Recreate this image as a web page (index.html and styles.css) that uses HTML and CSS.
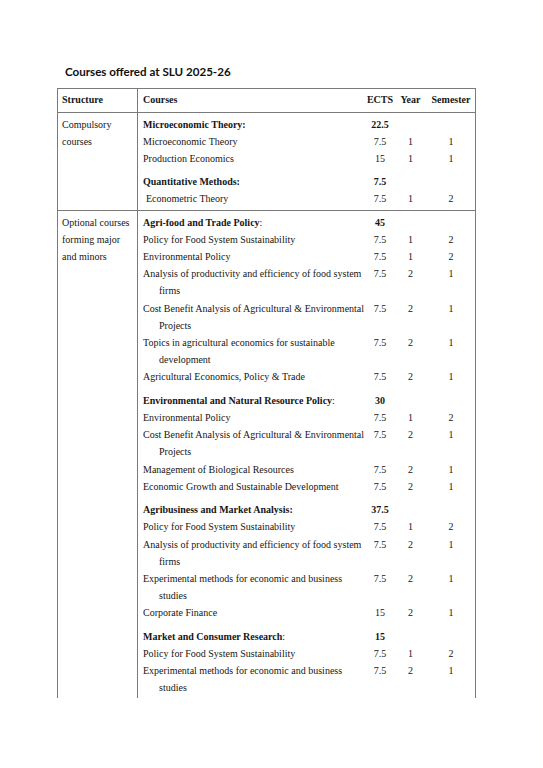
FILE: index.html
```html
<!DOCTYPE html>
<html lang="en">
<head>
<meta charset="utf-8">
<title>Courses offered at SLU 2025-26</title>
<link rel="stylesheet" href="styles.css">
</head>
<body>
<h1 class="title">Courses offered at SLU 2025-26</h1>
<div class="sheet">
  <div class="row head-row">
    <div class="struct"><b>Structure</b></div>
    <div class="cell">
      <div class="line">
        <span class="course"><b>Courses</b></span><b class="num">ECTS</b><b class="num">Year</b><b class="num">Semester</b>
      </div>
    </div>
  </div>

  <div class="row compulsory">
    <div class="struct">Compulsory courses</div>
    <div class="cell">
      <div class="group">
        <div class="line gh"><span class="course"><b>Microeconomic Theory:</b></span><b class="num">22.5</b><span></span><span></span></div>
        <div class="line"><span class="course">Microeconomic Theory</span><span class="num">7.5</span><span class="num">1</span><span class="num">1</span></div>
        <div class="line"><span class="course">Production Economics</span><span class="num">15</span><span class="num">1</span><span class="num">1</span></div>
      </div>
      <div class="group">
        <div class="line gh"><span class="course"><b>Quantitative Methods:</b></span><b class="num">7.5</b><span></span><span></span></div>
        <div class="line"><span class="course nudge">Econometric Theory</span><span class="num">7.5</span><span class="num">1</span><span class="num">2</span></div>
      </div>
    </div>
  </div>

  <div class="row optional">
    <div class="struct">Optional courses forming major and minors</div>
    <div class="cell">
      <div class="group">
        <div class="line gh"><span class="course"><b>Agri-food and Trade Policy</b>:</span><b class="num">45</b><span></span><span></span></div>
        <div class="line"><span class="course">Policy for Food System Sustainability</span><span class="num">7.5</span><span class="num">1</span><span class="num">2</span></div>
        <div class="line"><span class="course">Environmental Policy</span><span class="num">7.5</span><span class="num">1</span><span class="num">2</span></div>
        <div class="line"><span class="course">Analysis of productivity and efficiency of food system firms</span><span class="num">7.5</span><span class="num">2</span><span class="num">1</span></div>
        <div class="line"><span class="course">Cost Benefit Analysis of Agricultural &amp; Environmental Projects</span><span class="num">7.5</span><span class="num">2</span><span class="num">1</span></div>
        <div class="line"><span class="course">Topics in agricultural economics for sustainable development</span><span class="num">7.5</span><span class="num">2</span><span class="num">1</span></div>
        <div class="line"><span class="course">Agricultural Economics, Policy &amp; Trade</span><span class="num">7.5</span><span class="num">2</span><span class="num">1</span></div>
      </div>
      <div class="group">
        <div class="line gh"><span class="course"><b>Environmental and Natural Resource Policy</b>:</span><b class="num">30</b><span></span><span></span></div>
        <div class="line"><span class="course">Environmental Policy</span><span class="num">7.5</span><span class="num">1</span><span class="num">2</span></div>
        <div class="line"><span class="course">Cost Benefit Analysis of Agricultural &amp; Environmental Projects</span><span class="num">7.5</span><span class="num">2</span><span class="num">1</span></div>
        <div class="line"><span class="course">Management of Biological Resources</span><span class="num">7.5</span><span class="num">2</span><span class="num">1</span></div>
        <div class="line"><span class="course">Economic Growth and Sustainable Development</span><span class="num">7.5</span><span class="num">2</span><span class="num">1</span></div>
      </div>
      <div class="group">
        <div class="line gh"><span class="course"><b>Agribusiness and Market Analysis:</b></span><b class="num">37.5</b><span></span><span></span></div>
        <div class="line"><span class="course">Policy for Food System Sustainability</span><span class="num">7.5</span><span class="num">1</span><span class="num">2</span></div>
        <div class="line"><span class="course">Analysis of productivity and efficiency of food system firms</span><span class="num">7.5</span><span class="num">2</span><span class="num">1</span></div>
        <div class="line"><span class="course">Experimental methods for economic and business studies</span><span class="num">7.5</span><span class="num">2</span><span class="num">1</span></div>
        <div class="line"><span class="course">Corporate Finance</span><span class="num">15</span><span class="num">2</span><span class="num">1</span></div>
      </div>
      <div class="group">
        <div class="line gh"><span class="course"><b>Market and Consumer Research</b>:</span><b class="num">15</b><span></span><span></span></div>
        <div class="line"><span class="course">Policy for Food System Sustainability</span><span class="num">7.5</span><span class="num">1</span><span class="num">2</span></div>
        <div class="line"><span class="course">Experimental methods for economic and business studies</span><span class="num">7.5</span><span class="num">2</span><span class="num">1</span></div>
      </div>
    </div>
  </div>
</div>
</body>
</html>
```

FILE: styles.css
```css
html, body {
  margin: 0;
  padding: 0;
  background: #ffffff;
}

body {
  color: #161616;
  font-family: "Liberation Serif", "Times New Roman", serif;
  font-size: 10px;
}

.title {
  margin: 0 0 0 65px;
  padding-top: 64px;
  font-family: Lato, "Liberation Sans", sans-serif;
  font-weight: 700;
  font-size: 11.6px;
  line-height: 16px;
  color: #111111;
}

.sheet {
  margin: 8px 0 0 57px;
  width: 419px;
  border-top: 1px solid #7a7a7a;
  border-left: 1px solid #7a7a7a;
  border-right: 1px solid #7a7a7a;
  box-sizing: border-box;
}

.row {
  display: grid;
  grid-template-columns: 80px 1fr;
  border-bottom: 1px solid #7a7a7a;
}

.row.optional {
  border-bottom: none;
}

.struct {
  border-right: 1px solid #7a7a7a;
  padding-left: 4px;
  padding-right: 4px;
  line-height: 17.2px;
}

.cell {
  padding-left: 5px;
}

.head-row .struct,
.head-row .cell {
  padding-top: 2px;
  padding-bottom: 4px;
}

.compulsory .struct,
.compulsory .cell {
  padding-top: 3.2px;
  padding-bottom: 3.4px;
}

.optional .struct,
.optional .cell {
  padding-top: 2.2px;
  padding-bottom: 1px;
}

.group + .group {
  margin-top: 6.2px;
}

.compulsory .group + .group {
  margin-top: 5.6px;
}

.line {
  display: grid;
  grid-template-columns: 223px 28px 33px 1fr;
  line-height: 17.2px;
}

.compulsory .line,
.compulsory .struct {
  line-height: 17px;
}

.course {
  padding-left: 16px;
  text-indent: -16px;
}

.course.nudge {
  padding-left: 19px;
}

.num {
  text-align: center;
}
```
